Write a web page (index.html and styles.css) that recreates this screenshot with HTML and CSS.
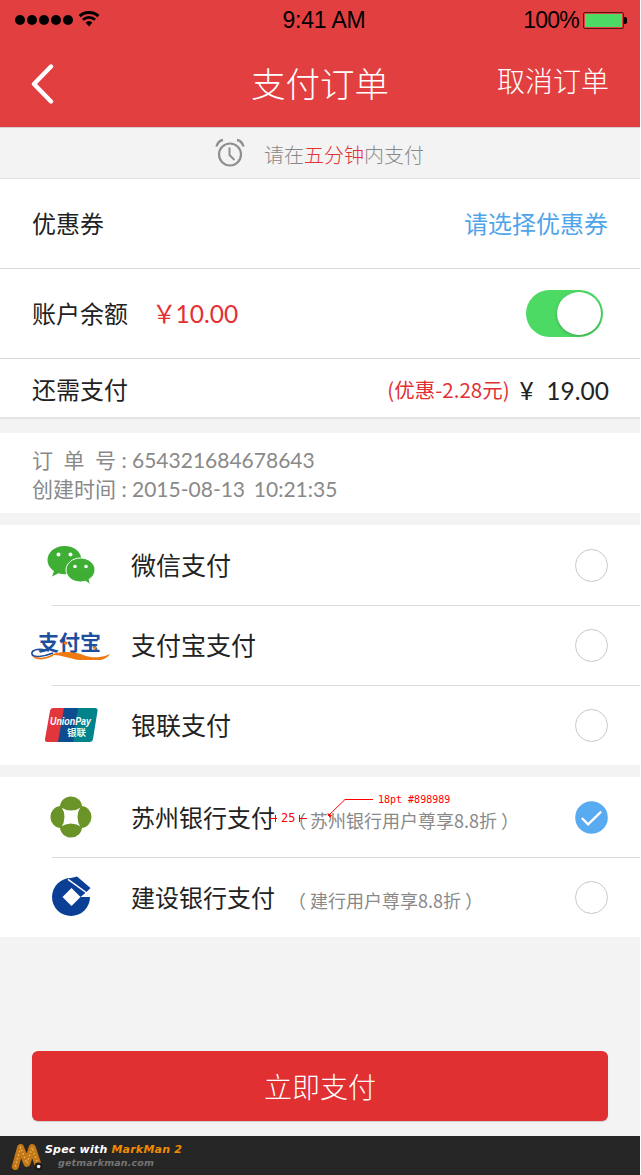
FILE: index.html
```html
<!DOCTYPE html>
<html lang="zh">
<head>
<meta charset="utf-8">
<title>支付订单</title>
<link rel="stylesheet" href="styles.css">
</head>
<body>
<div class="page">
  <header class="header">
    <div class="status">
      <div class="status-left">
        <span class="dots"><i></i><i></i><i></i><i></i><i></i></span>
        <svg class="wifi" width="22" height="16" viewBox="0 0 22 16"><path d="M11 15.500 7.600 11.600a5 5 0 0 1 6.800 0zM5.900 9.800 4 7.700a10.500 10.500 0 0 1 14 0l-1.900 2.100a7.600 7.600 0 0 0-10.200 0zM2.700 6.200.6 4a15.500 15.500 0 0 1 20.800 0l-2.100 2.200a12.400 12.400 0 0 0-16.600 0z" fill="#000"/></svg>
      </div>
      <div class="status-time">9:41 AM</div>
      <div class="status-right">
        <span>100%</span>
        <span class="battery"><span class="battery-fill"></span></span>
      </div>
    </div>
    <div class="nav">
      <svg class="back" width="24" height="40" viewBox="0 0 24 40"><path d="M20 2.500 3 20l17 17.500" fill="none" stroke="#fff" stroke-width="4.400" stroke-linecap="round" stroke-linejoin="round"/></svg>
      <h1 class="title">支付订单</h1>
      <span class="cancel">取消订单</span>
    </div>
  </header>

  <div class="notice">
    <svg class="clock" width="30" height="30" viewBox="0 0 30 30"><circle cx="15" cy="16.500" r="11" fill="none" stroke="#8f8f8f" stroke-width="2.200"/><path d="M14.500 9.500v7.500l5 5" fill="none" stroke="#8f8f8f" stroke-width="2"/><path d="M1.500 8.500C2.500 5 5 2.500 8 2M28.500 8.500C27.500 5 25 2.500 22 2" fill="none" stroke="#8f8f8f" stroke-width="2.400"/></svg>
    <span class="notice-text">请在<em>五分钟</em>内支付</span>
  </div>

  <section class="summary">
    <div class="row row-tall">
      <span class="label">优惠券</span>
      <span class="link">请选择优惠券</span>
    </div>
    <div class="row row-tall">
      <div class="balance">
        <span class="label">账户余额</span>
        <span class="balance-value"><span class="yen">￥</span>10.00</span>
      </div>
      <span class="toggle"><span class="knob"></span></span>
    </div>
    <div class="row row-short">
      <span class="label">还需支付</span>
      <div class="due">
        <span class="discount">(优惠-2.28元)</span>
        <span class="due-value">¥&nbsp;&nbsp;19.00</span>
      </div>
    </div>
  </section>

  <section class="order">
    <div class="order-line"><span class="order-key"><span>订</span><span>单</span><span>号</span></span><span class="order-colon">:</span>654321684678643</div>
    <div class="order-line"><span class="order-key"><span>创建时间</span></span><span class="order-colon">:</span>2015-08-13&nbsp;&nbsp;10:21:35</div>
  </section>

  <section class="pay-group">
    <div class="pay">
      <div class="pay-icon">
        <svg width="52" height="42" viewBox="0 -1 52 42"><path d="M19.500 1C9.800 1 2.500 7.300 2.500 15c0 4.500 2.500 8.500 6.500 11l-2 5.500 6.500-3.200c2 .6 4 .9 6 .9 9.700 0 17-6.300 17-14.200S29.200 1 19.500 1z" fill="#3eae34"/><path d="M35.500 13C27.500 13 21 18.400 21 25c0 6.700 6.500 12 14.500 12 1.800 0 3.400-.3 5-.8l5 3.300-1.400-5.200c3.600-2.300 5.900-5.600 5.900-9.300 0-6.600-6.500-12-14.500-12z" fill="#3eae34" stroke="#fff" stroke-width="1"/><circle cx="13.500" cy="9.500" r="2" fill="#fff"/><circle cx="25.500" cy="9.500" r="2" fill="#fff"/><circle cx="30" cy="21.500" r="1.800" fill="#fff"/><circle cx="41" cy="21.500" r="1.800" fill="#fff"/></svg>
      </div>
      <span class="pay-name">微信支付</span>
      <span class="radio"></span>
    </div>
    <div class="pay">
      <div class="pay-icon">
        <svg width="80" height="30" viewBox="0 0 80 30"><text x="7" y="20" class="ali-text">支付宝</text><circle cx="34.500" cy="13" r="1.800" fill="#ef7a12"/><circle cx="64" cy="18" r="1.600" fill="#ef7a12"/><path d="M18 21C10 18 0 19 1 24c1 4 11 3 21-1" fill="none" stroke="#1d4f9e" stroke-width="1.700"/><path d="M3 27c5 3 13 1 19-2" fill="none" stroke="#ef7a12" stroke-width="1.600"/><path d="M20 25c10-5 25-3 35 1 10 3 20 0 24-2-3 5-11 8-24 7-13-1-25-7-35-6z" fill="#ef7a12"/></svg>
      </div>
      <span class="pay-name">支付宝支付</span>
      <span class="radio"></span>
    </div>
    <div class="pay">
      <div class="pay-icon">
        <svg width="54" height="34" viewBox="0 0 54 34"><path d="M9.500 0H26L21 34H3.500Q.5 34 1 31L6 3Q6.500 0 9.500 0z" fill="#e3353c"/><path d="M20 0h22l-5 34H14z" fill="#0d4c8f"/><path d="M34 0h17q3 0 2.500 3L49 31q-.5 3-3.500 3H29z" fill="#00838a"/><text x="6" y="17" class="up-text" textLength="41" lengthAdjust="spacingAndGlyphs">UnionPay</text><text x="23" y="27.500" class="up-cn">银联</text></svg>
      </div>
      <span class="pay-name">银联支付</span>
      <span class="radio"></span>
    </div>
  </section>

  <section class="pay-group">
    <div class="pay">
      <div class="pay-icon">
        <svg width="42" height="42" viewBox="0 0 42 42"><path d="M10 11A11 10.500 0 0 1 32 11Q21 18 10 11z" fill="#6b9428"/><path d="M10 31A11 10.500 0 0 0 32 31Q21 24 10 31z" fill="#6b9428"/><path d="M11 10A10.500 11 0 0 0 11 32Q18 21 11 10z" fill="#6b9428"/><path d="M31 10A10.500 11 0 0 1 31 32Q24 21 31 10z" fill="#6b9428"/></svg>
      </div>
      <span class="pay-name pay-name-bank">苏州银行支付</span>
      <span class="pay-note">（ 苏州银行用户尊享8.8折 ）</span>
      <span class="radio radio-on">
        <svg width="33" height="33" viewBox="0 0 34 34"><circle cx="17" cy="17" r="16.800" fill="#58abf1"/><path d="M7 17.500l6.500 6.500L27 11" fill="none" stroke="#fff" stroke-width="2.400"/></svg>
      </span>
      <div class="markup">
        <svg class="markup-lines" width="110" height="34" viewBox="0 0 110 34"><path d="M0 20.500h7M5.500 17v7M29 20.500h8M29.500 17v7M58 18 75 1.500h28" fill="none" stroke="#f00" stroke-width="1"/><path d="M57 15l5 2-2 3z" fill="#f00"/></svg>
        <span class="markup-gap">25</span>
        <span class="markup-spec">18pt #898989</span>
      </div>
    </div>
    <div class="pay">
      <div class="pay-icon">
        <svg width="40" height="42" viewBox="-1 0 40 42"><path d="M19 2A19 19 0 1 0 38 21H28.500L34 16.500 38.500 12 25 .5z" fill="#0b3f96"/><path d="M19.500 12 28.500 21 19.500 30 10.500 21z" fill="#fff"/><path d="M16 3.300 35.500 17.500" stroke="#fff" stroke-width="1.500"/></svg>
      </div>
      <span class="pay-name pay-name-bank">建设银行支付</span>
      <span class="pay-note">（ 建行用户尊享8.8折 ）</span>
      <span class="radio"></span>
    </div>
  </section>

  <div class="action">
    <button class="pay-btn" type="button">立即支付</button>
  </div>

  <footer class="spec">
    <svg class="spec-logo" width="34" height="30" viewBox="2 1 32 28"><path d="M6 24 11 6 17 21 22 6 28 24" fill="none" stroke="#c27818" stroke-width="6.500" stroke-linecap="round" stroke-linejoin="round"/><path d="M6 24 11 6 17 21 22 6 28 24" fill="none" stroke="#f0b75c" stroke-width="1.200" stroke-dasharray="1.500 2"/><circle cx="28" cy="24" r="3.800" fill="#1a1a1a"/><circle cx="28" cy="24" r="1.700" fill="#eee"/></svg>
    <div class="spec-text">
      <div class="spec-main">Spec with <b>MarkMan 2</b></div>
      <div class="spec-sub">getmarkman.com</div>
    </div>
  </footer>
</div>
</body>
</html>
```
FILE: styles.css
```css
* { box-sizing: border-box; }
html, body { margin: 0; padding: 0; background: #fff; }
body { font-family: "Noto Sans CJK SC", "Lato", sans-serif; font-weight: 300; color: #222; }
.page { width: 640px; height: 1175px; background: #f3f3f3; display: flex; flex-direction: column; }

.header { height: 128px; background: #e23f41; border-bottom: 1px solid #d3cfcf; display: flex; flex-direction: column; flex: none; }
.status { height: 40px; padding: 0 15px; display: grid; grid-template-columns: 1fr auto 1fr; align-items: center; color: #000; font-family: "Liberation Sans", sans-serif; font-size: 23px; font-weight: 400; }
.status-left { display: flex; align-items: center; gap: 5px; }
.dots { display: flex; gap: 2px; }
.dots i { width: 10px; height: 10px; border-radius: 50%; background: #000; display: block; }
.wifi { margin-top: -2px; }
.status-right { display: flex; align-items: center; justify-content: flex-end; gap: 4px; letter-spacing: -.8px; }
.status-time { letter-spacing: -.2px; margin-left: 8px; }
.battery { position: relative; width: 41px; height: 17px; margin-right: 1px; border: 1px solid #5a1518; border-radius: 2px; padding: 1px; display: block; }
.battery::after { content: ""; position: absolute; right: -4px; top: 4px; width: 3px; height: 7px; background: #000; border-radius: 0 2px 2px 0; }
.battery-fill { display: block; height: 100%; background: #4cd964; }

.nav { flex: 1; display: grid; grid-template-columns: 1fr auto 1fr; align-items: center; padding: 0 31px 3px 31px; color: #fff; }
.back { display: block; margin-top: 4px; }
.title { margin: 0; font-size: 34.500px; font-weight: 300; line-height: 48px; }
.cancel { justify-self: end; font-size: 28px; line-height: 40px; margin-top: -5px; }

.notice { height: 51px; flex: none; display: flex; align-items: center; justify-content: center; gap: 19px; padding-right: 1px; border-bottom: 1px solid #e2e2e2; color: #898989; font-size: 20px; }
.notice-text { margin-top: 2px; }
.notice-text em { font-style: normal; color: #e23034; }

.summary { background: #fff; flex: none; border-bottom: 2px solid #e4e4e4; }
.row { display: flex; align-items: center; justify-content: space-between; padding: 0 32px; border-bottom: 1px solid #d8d8d8; }
.row:last-child { border-bottom: 0; }
.row-tall { height: 90px; padding-bottom: 2px; }
.row-short { height: 58px; }
.label { font-size: 24px; font-weight: 400; color: #222; }
.link { font-size: 24px; color: #4fa4ea; font-weight: 400; }
.balance { display: flex; align-items: center; gap: 24px; }
.balance-value { font-size: 24.500px; color: #e23034; font-family: "Lato", "Noto Sans CJK SC", sans-serif; font-weight: 400; }
.yen { margin-right: -1px; }
.toggle { width: 77px; height: 47px; margin-top: 2px; margin-right: 5px; background: #4cd964; border-radius: 24px; padding: 2px; display: flex; justify-content: flex-end; }
.knob { width: 44px; height: 43px; background: #fff; border-radius: 50%; box-shadow: 0 1px 3px rgba(0,0,0,.25); }
.due { display: flex; align-items: center; gap: 10px; padding-top: 4px; margin-right: -1px; }
.discount { font-size: 20.500px; color: #e23034; font-weight: 400; margin-top: -2px; }
.due-value { font-size: 24.500px; font-family: "Lato", sans-serif; font-weight: 400; color: #222; }

.order { flex: none; margin-top: 14px; height: 80px; background: #fff; padding: 12px 32px 0; color: #898989; font-family: "Lato", "Noto Sans CJK SC", sans-serif; font-size: 21px; font-weight: 400; line-height: 29px; word-spacing: -1px; }
.order-line { display: flex; }
.order-key { width: 84px; display: flex; justify-content: space-between; }
.order-colon { width: 16px; text-align: center; }

.pay-group { flex: none; margin-top: 12px; background: #fff; }
.pay { position: relative; height: 80px; display: flex; align-items: center; }
.pay + .pay::before { content: ""; position: absolute; left: 52px; right: 0; top: 0; height: 1px; background: #dcdcdc; }
.pay-icon { width: 131px; flex: none; display: flex; justify-content: center; padding-left: 10px; }
.pay-icon svg { display: block; flex: none; }
.pay-name { font-size: 25px; font-weight: 400; color: #222; margin-top: -2px; }
.pay-name-bank { font-size: 24px; }
.pay-note { font-size: 18px; color: #898989; margin-left: 13px; margin-top: 5px; font-weight: 400; }
.radio { margin-left: auto; margin-right: 32px; width: 33px; height: 33px; border-radius: 50%; border: 1px solid #c9c9c9; flex: none; }
.radio-on { border: 0; }
.radio-on svg { display: block; }
.ali-text { font-family: "Noto Sans CJK SC", sans-serif; font-size: 21px; font-weight: 700; fill: #1d4f9e; }
.up-text { font-family: "Liberation Sans", sans-serif; font-size: 10.500px; font-weight: 700; font-style: italic; fill: #fff; }
.up-cn { font-family: "Noto Sans CJK SC", sans-serif; font-size: 9.500px; font-weight: 700; fill: #dfe; }

.markup { position: absolute; left: 270px; top: 21px; width: 190px; height: 34px; color: #f00; font-family: "DejaVu Sans Mono", monospace; }
.markup-lines { position: absolute; left: 0; top: 0; }
.markup-gap { position: absolute; left: 11px; top: 12px; font-size: 12px; line-height: 16px; }
.markup-spec { position: absolute; left: 108px; top: -5px; font-size: 10px; line-height: 14px; white-space: nowrap; }

.action { flex: 1; display: flex; align-items: flex-end; padding: 0 32px 15px; }
.pay-btn { width: 576px; height: 70px; border: 0; border-radius: 6px; background: #e03032; color: #fff; font: 300 28px "Noto Sans CJK SC", sans-serif; box-shadow: 0 1px 1px rgba(0,0,0,.15); }

.spec { height: 39px; flex: none; background: #262626; display: flex; align-items: center; gap: 0; padding-left: 11px; }
.spec-logo { margin-top: 2px; flex: none; }
.spec-text { font-family: "DejaVu Sans", sans-serif; font-style: italic; font-weight: 700; }
.spec-main { font-size: 11px; line-height: 14px; color: #fff; letter-spacing: .2px; }
.spec-main b { color: #f08c00; }
.spec-sub { font-size: 9.500px; line-height: 12px; color: #757575; margin-left: 13px; letter-spacing: .15px; }
```
